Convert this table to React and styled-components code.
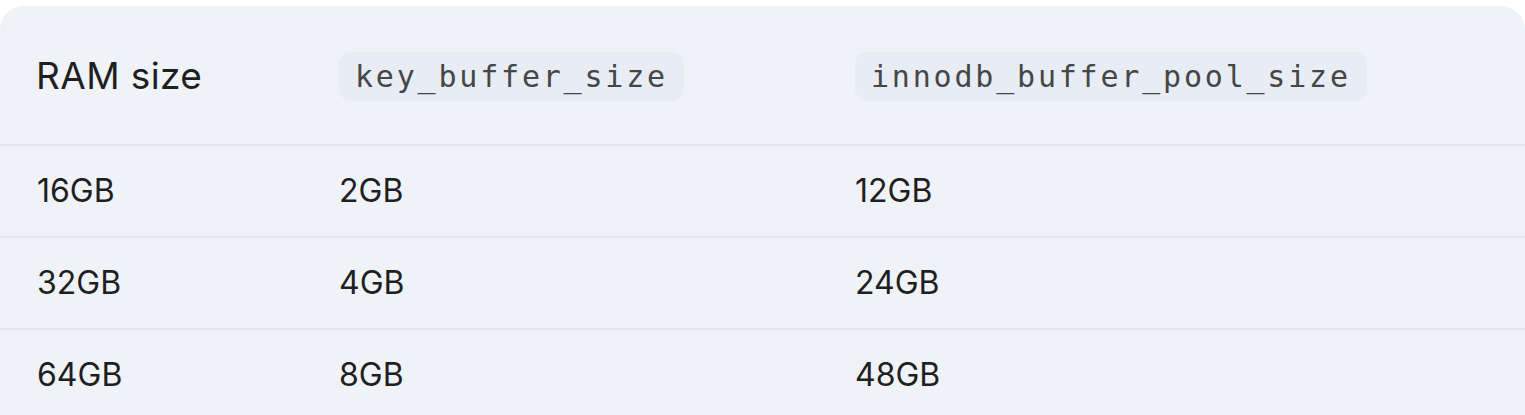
import React from "react";
import styled, { createGlobalStyle } from "styled-components";

const Global = createGlobalStyle`
  html, body { margin: 0; padding: 0; background: #ffffff; }
  body { font-family: Inter, "Noto Sans", sans-serif; }
`;

const Card = styled.div`
  margin-top: 6px;
  width: 1525px;
  background: #eff2f7;
  border-radius: 24px 24px 0 0;
  overflow: hidden;
`;

const Row = styled.div`
  display: grid;
  grid-template-columns: 302px 516px 1fr;
  align-items: center;
  border-bottom: 2px solid #e3e8f0;
  box-sizing: border-box;
  height: ${(p) => (p.$head ? "140px" : "92px")};
  padding-top: ${(p) => (p.$head ? "2px" : "0")};
`;

const Cell = styled.div`
  padding-left: ${(p) => (p.$head ? "36px" : "37px")};
  color: #1f1f1f;
  font-size: ${(p) => (p.$head ? "37px" : "32px")};
  letter-spacing: ${(p) => (p.$head ? "0.4px" : "0")};
  line-height: 40px;
  white-space: nowrap;
`;

const Code = styled.code`
  display: inline-block;
  background: #e8ecf4;
  border-radius: 12px;
  padding: 0 16px;
  height: 49px;
  line-height: 49px;
  font-family: "DejaVu Sans Mono", "Liberation Mono", monospace;
  font-size: 30px;
  letter-spacing: 2.8px;
  color: #444746;
`;

const rows = [
  ["16GB", "2GB", "12GB"],
  ["32GB", "4GB", "24GB"],
  ["64GB", "8GB", "48GB"],
];

export default function App() {
  return (
    <>
      <Global />
      <Card>
        <Row $head>
          <Cell $head>RAM size</Cell>
          <Cell>
            <Code>key_buffer_size</Code>
          </Cell>
          <Cell>
            <Code>innodb_buffer_pool_size</Code>
          </Cell>
        </Row>
        {rows.map((r) => (
          <Row key={r[0]}>
            {r.map((c, i) => (
              <Cell key={i}>{c}</Cell>
            ))}
          </Row>
        ))}
      </Card>
    </>
  );
}
